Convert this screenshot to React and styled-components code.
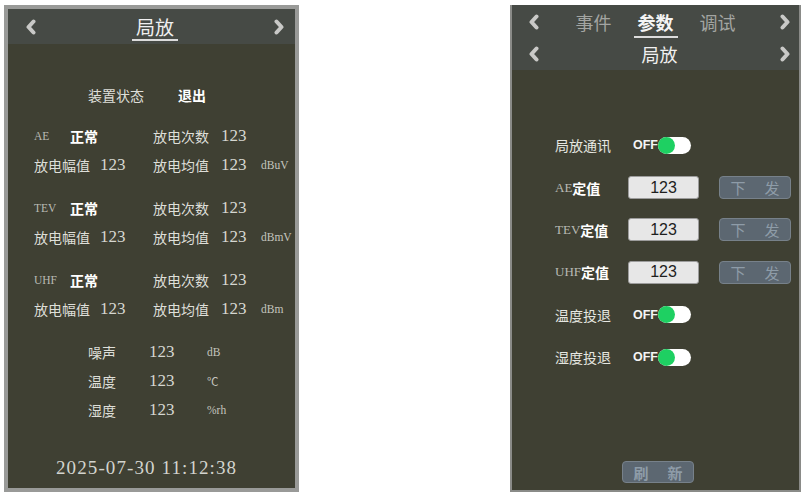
import React from "react";
import styled, { createGlobalStyle } from "styled-components";

const Global = createGlobalStyle`
  html, body { margin: 0; padding: 0; background: #ffffff; }
  body { font-family: "Noto Sans CJK SC", "Noto Sans", sans-serif; }
  * { box-sizing: border-box; }
`;

const CJK = `"Noto Sans CJK SC", "Noto Sans", sans-serif`;
const SERIF = `"Liberation Serif", "Noto Sans CJK SC", serif`;

const Page = styled.div`
  display: flex;
  align-items: flex-start;
  gap: 211px;
  padding: 5px 0 0 4px;
  width: 806px;
  height: 495px;
`;

const LeftPanel = styled.div`
  width: 295px;
  height: 487px;
  border: 4px solid #999a98;
  background: #3f4033;
  display: flex;
  flex-direction: column;
`;

const RightPanel = styled.div`
  width: 291px;
  height: 487px;
  border: 2px solid #8a8b88;
  border-top: none;
  background: #3f4033;
  display: flex;
  flex-direction: column;
`;

const HeaderBar = styled.div`
  background: #464a45;
  display: flex;
  flex-direction: column;
`;

const HeaderRow = styled.div`
  height: ${(p) => p.$h}px;
  display: flex;
  align-items: center;
  justify-content: space-between;
  padding: 0 ${(p) => p.$pr}px 0 ${(p) => p.$pl}px;
`;

const Title = styled.div`
  font-family: ${CJK};
  font-size: ${(p) => p.$size || 19}px;
  color: #f0f0f0;
  position: relative;
  line-height: 1;
  padding: 0 ${(p) => p.$ul || 0}px;
  ${(p) =>
    p.$underline
      ? `&::after { content: ""; position: absolute; left: 0; right: 0; bottom: ${p.$ulBottom}px; height: 2px; background: #dcdcdc; }`
      : ""}
`;

const Tabs = styled.div`
  display: flex;
  align-items: center;
  gap: 20px;
  margin-right: 8px;
`;

const Tab = styled.div`
  font-family: ${CJK};
  font-size: 18px;
  line-height: 1;
  padding: 0 3px;
  color: ${(p) => (p.$active ? "#f4f4f4" : "#a3a5a2")};
  font-weight: ${(p) => (p.$active ? 700 : 400)};
  position: relative;
  ${(p) =>
    p.$active
      ? `&::after { content: ""; position: absolute; left: -1px; right: -1px; bottom: -7px; height: 2px; background: #dcdcdc; }`
      : ""}
`;

const Chevron = ({ dir }) => (
  <svg width="12" height="16" viewBox="0 0 12 16">
    <path
      d={dir === "left" ? "M8.5 2.5 L3.5 8 L8.5 13.5" : "M3.5 2.5 L8.5 8 L3.5 13.5"}
      fill="none"
      stroke="#c9c9c7"
      strokeWidth="4"
      strokeLinecap="round"
      strokeLinejoin="round"
    />
  </svg>
);

/* ---------- left body ---------- */
const LeftBody = styled.div`
  flex: 1;
  display: flex;
  flex-direction: column;
  padding: 36px 0 0 26px;
`;

const StatusRow = styled.div`
  display: grid;
  grid-template-columns: 90px auto;
  align-items: center;
  height: 29px;
  padding-left: 54px;
  margin-bottom: 12px;
`;

const Group = styled.div`
  display: flex;
  flex-direction: column;
  margin-bottom: 14px;
`;

const DataRow = styled.div`
  display: grid;
  grid-template-columns: 66px 53px 68px 40px auto;
  align-items: center;
  height: 29px;
`;

const EnvRow = styled.div`
  display: grid;
  grid-template-columns: 61px 58px auto;
  align-items: center;
  height: 29px;
  padding-left: 54px;
`;

const Label = styled.span`
  font-family: ${CJK};
  font-size: 14px;
  color: #dedfd9;
  white-space: nowrap;
`;

const Strong = styled.span`
  font-family: ${CJK};
  font-size: 14px;
  font-weight: 700;
  color: #ffffff;
  white-space: nowrap;
`;

const Tag = styled.span`
  display: inline-block;
  width: ${(p) => (p.$w ? `${p.$w}px` : "auto")};
  font-family: ${SERIF};
  font-size: ${(p) => p.$size || 11.5}px;
  color: #b9bab4;
`;

const Num = styled.span`
  font-family: ${SERIF};
  font-size: 17px;
  color: #d6d7d1;
`;

const Unit = styled.span`
  font-family: ${SERIF};
  font-size: 11.5px;
  color: #c4c5bf;
`;

const Cell = styled.div`
  display: flex;
  align-items: center;
  white-space: nowrap;
`;

const DateLine = styled.div`
  margin-top: auto;
  margin-bottom: 6px;
  margin-left: 22px;
  height: 29px;
  font-family: ${SERIF};
  font-size: 19px;
  letter-spacing: 1.1px;
  color: #d3d4ce;
  display: flex;
  align-items: center;
`;

/* ---------- right body ---------- */
const RightBody = styled.div`
  flex: 1;
  display: flex;
  flex-direction: column;
  padding: 54px 0 7px 43px;
`;

const SetRow = styled.div`
  display: grid;
  grid-template-columns: 73px 71px auto;
  align-items: center;
  height: 42.4px;
`;

const SetLabel = styled.span`
  font-family: ${CJK};
  font-size: 14px;
  color: #e6e7e1;
  white-space: nowrap;
  display: flex;
  align-items: center;
`;

const Toggle = styled.div`
  display: flex;
  align-items: center;
  margin-left: 5px;
`;

const OffText = styled.span`
  font-family: "Liberation Sans", sans-serif;
  font-weight: 700;
  font-size: 12.5px;
  color: #f5f5f5;
`;

const Pill = styled.div`
  width: 33px;
  height: 17px;
  border-radius: 9px;
  background: #ffffff;
  display: flex;
  align-items: center;
`;

const Knob = styled.div`
  width: 17px;
  height: 17px;
  border-radius: 50%;
  background: #1ed062;
`;

const InputBox = styled.div`
  height: 23px;
  background: #e7e7e7;
  border: 1px solid #9c9c9c;
  border-radius: 3px;
  display: flex;
  align-items: center;
  justify-content: center;
  font-family: "Liberation Sans", sans-serif;
  font-size: 16px;
  color: #1e1e1e;
`;

const ActButton = styled.div`
  width: 72px;
  height: ${(p) => p.$h || 23}px;
  margin-left: ${(p) => p.$ml || 0}px;
  background: #5c6771;
  border: 1px solid #77818a;
  border-radius: 4px;
  display: flex;
  align-items: center;
  justify-content: center;
  gap: 19px;
  font-family: ${CJK};
  font-size: 15px;
  color: #8e9ca8;
  ${(p) => (p.$bold ? "font-weight: 700;" : "")}
`;

const BottomBar = styled.div`
  margin-top: auto;
  display: flex;
  padding-left: 67px;
`;

function ToggleSwitch() {
  return (
    <Toggle>
      <OffText>OFF</OffText>
      <Pill>
        <Knob />
      </Pill>
    </Toggle>
  );
}

function SendButton() {
  return (
    <ActButton $ml={20}>
      <span>下</span>
      <span>发</span>
    </ActButton>
  );
}

function Group3({ tag, tagW, unit }) {
  return (
    <Group>
      <DataRow>
        <Cell>
          <Tag $w={tagW}>{tag}</Tag>
          <Strong>正常</Strong>
        </Cell>
        <span />
        <Label>放电次数</Label>
        <Num>123</Num>
        <span />
      </DataRow>
      <DataRow>
        <Label>放电幅值</Label>
        <Num>123</Num>
        <Label>放电均值</Label>
        <Num>123</Num>
        <Unit>{unit}</Unit>
      </DataRow>
    </Group>
  );
}

function ValueRow({ tag }) {
  return (
    <SetRow>
      <SetLabel>
        <Tag $size={13}>{tag}</Tag>
        <Strong>定值</Strong>
      </SetLabel>
      <InputBox>123</InputBox>
      <SendButton />
    </SetRow>
  );
}

export default function App() {
  return (
    <>
      <Global />
      <Page>
        <LeftPanel>
          <HeaderBar>
            <HeaderRow $h={35} $pl={17} $pr={10}>
              <Chevron dir="left" />
              <Title $underline $ulBottom={-5} $ul={4}>
                局放
              </Title>
              <Chevron dir="right" />
            </HeaderRow>
          </HeaderBar>
          <LeftBody>
            <StatusRow>
              <Label>装置状态</Label>
              <Strong>退出</Strong>
            </StatusRow>
            <Group3 tag="AE" tagW={36} unit="dBuV" />
            <Group3 tag="TEV" tagW={36} unit="dBmV" />
            <Group3 tag="UHF" tagW={36} unit="dBm" />
            <EnvRow>
              <Label>噪声</Label>
              <Num>123</Num>
              <Unit>dB</Unit>
            </EnvRow>
            <EnvRow>
              <Label>温度</Label>
              <Num>123</Num>
              <Unit>℃</Unit>
            </EnvRow>
            <EnvRow>
              <Label>湿度</Label>
              <Num>123</Num>
              <Unit>%rh</Unit>
            </EnvRow>
            <DateLine>2025-07-30 11:12:38</DateLine>
          </LeftBody>
        </LeftPanel>

        <RightPanel>
          <HeaderBar>
            <HeaderRow $h={33} $pl={16} $pr={8}>
              <Chevron dir="left" />
              <Tabs>
                <Tab>事件</Tab>
                <Tab $active>参数</Tab>
                <Tab>调试</Tab>
              </Tabs>
              <Chevron dir="right" />
            </HeaderRow>
            <HeaderRow $h={32} $pl={16} $pr={8}>
              <Chevron dir="left" />
              <Title $size={18}>局放</Title>
              <Chevron dir="right" />
            </HeaderRow>
          </HeaderBar>
          <RightBody>
            <SetRow>
              <SetLabel>局放通讯</SetLabel>
              <ToggleSwitch />
            </SetRow>
            <ValueRow tag="AE" />
            <ValueRow tag="TEV" />
            <ValueRow tag="UHF" />
            <SetRow>
              <SetLabel>温度投退</SetLabel>
              <ToggleSwitch />
            </SetRow>
            <SetRow>
              <SetLabel>湿度投退</SetLabel>
              <ToggleSwitch />
            </SetRow>
            <BottomBar>
              <ActButton $h={22} $bold>
                <span>刷</span>
                <span>新</span>
              </ActButton>
            </BottomBar>
          </RightBody>
        </RightPanel>
      </Page>
    </>
  );
}
